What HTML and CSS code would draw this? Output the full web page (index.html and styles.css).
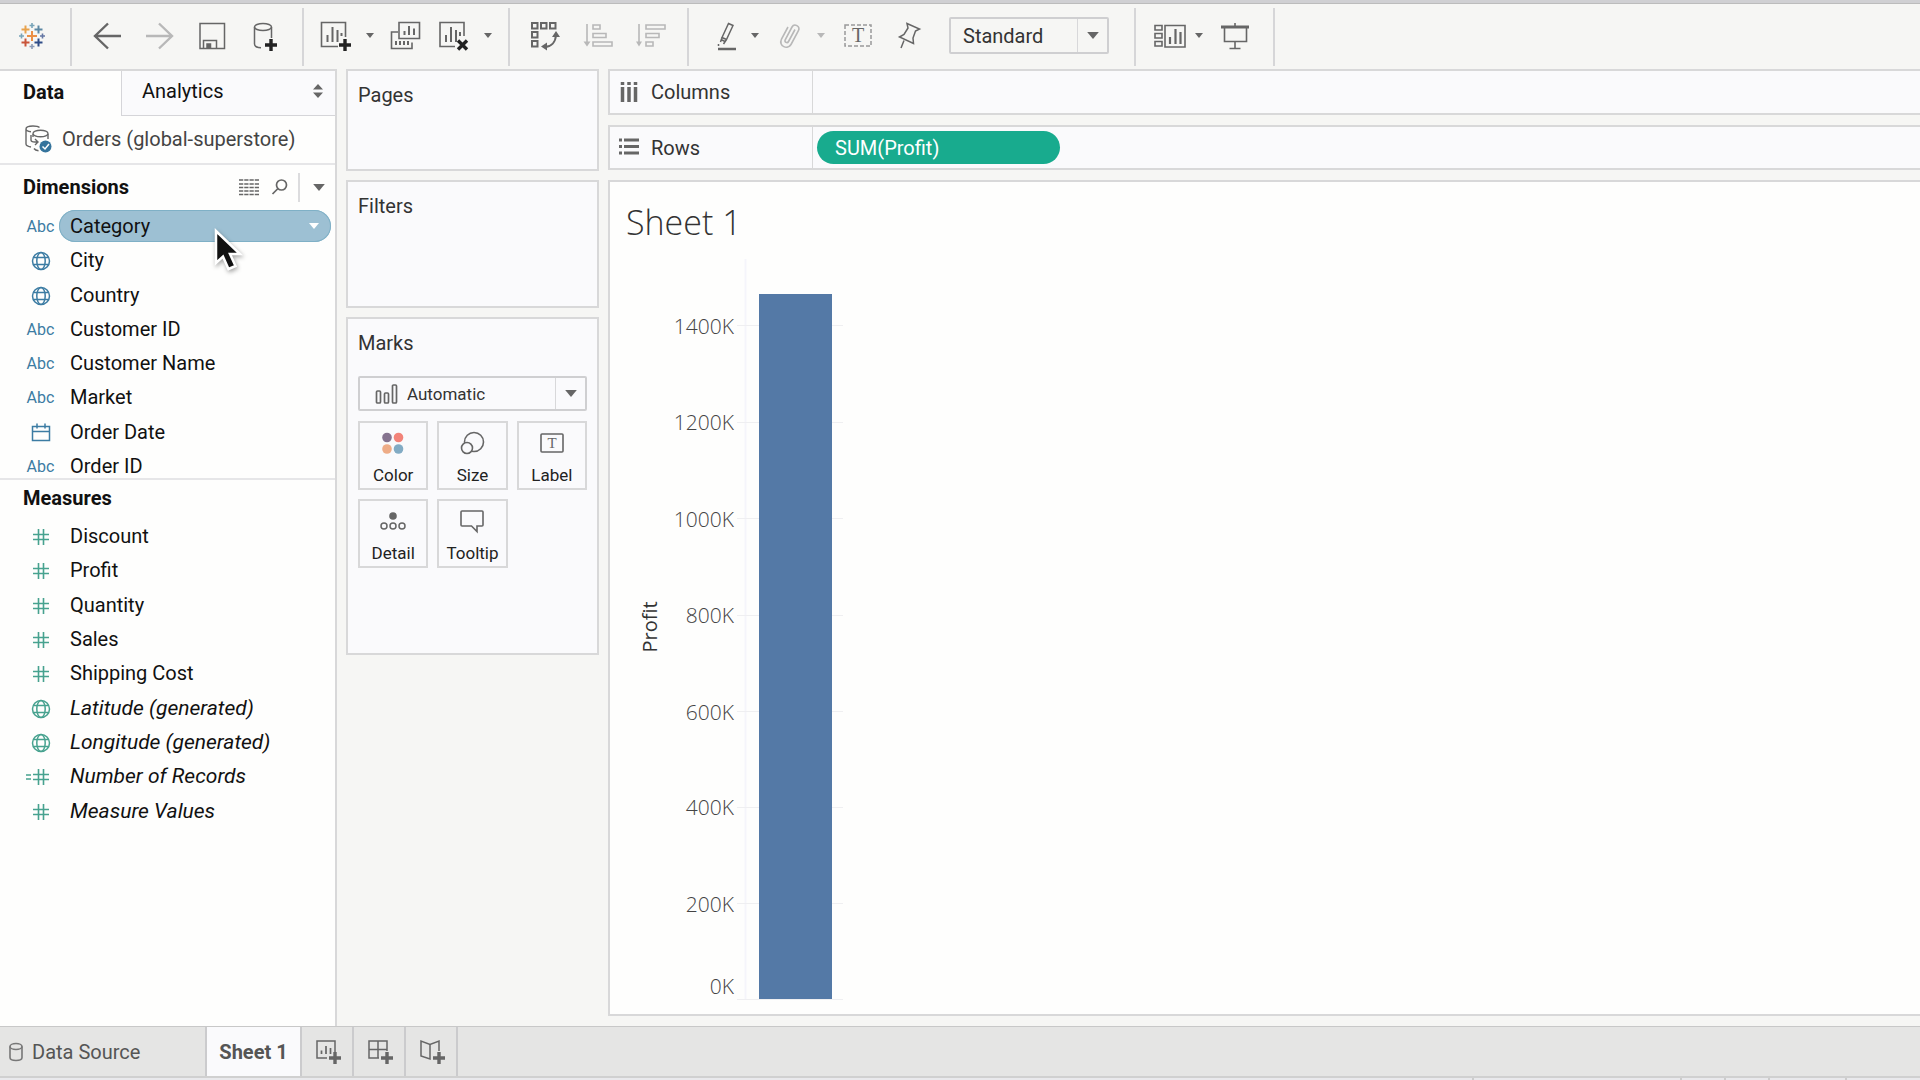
FILE: index.html
```html
<!DOCTYPE html>
<html lang="en">
<head>
<meta charset="utf-8">
<title>Sheet 1</title>
<link rel="stylesheet" href="styles.css">
</head>
<body>
<svg class="defs" aria-hidden="true">
  <symbol id="caret" viewBox="0 0 10 6"><path d="M0 0h10L5 6z" fill="currentColor"/></symbol>
  <symbol id="globe" viewBox="0 0 20 20"><g fill="none" stroke="currentColor" stroke-width="1.5"><circle cx="10" cy="10" r="8.5"/><ellipse cx="10" cy="10" rx="4.2" ry="8.5"/><path d="M2.5 6.5h15M2.5 13.5h15"/></g></symbol>
  <symbol id="hash" viewBox="0 0 18 18"><path d="M6.5 1v16M11.5 1v16M1 6.5h16M1 11.5h16" stroke="currentColor" stroke-width="1.6"/></symbol>
  <symbol id="plus" viewBox="0 0 12 12"><path d="M6 0v12M0 6h12" stroke="currentColor" stroke-width="3.4"/></symbol>
</svg>
<div class="app">
  <header class="toolbar">
    <div class="group group-logo">
      <button aria-label="Start page"><svg width="28" height="28" viewBox="0 0 28 28" fill="none"><g stroke-width="2"><path d="M14 9v10M9 14h10" stroke="#eb8f45"/><path d="M7.500 3.500v8M3.500 7.500h8" stroke="#e8a24c"/><path d="M20.500 3.500v8M16.500 7.500h8" stroke="#5c87a3"/><path d="M7.500 16.500v8M3.500 20.500h8" stroke="#c9553a"/><path d="M20.500 16.500v8M16.500 20.500h8" stroke="#2f4c87"/></g><g stroke-width="1.600"><path d="M14 1v5M11.500 3.500h5M3.500 11.500v5M1 14h5" stroke="#78a4b8"/><path d="M24.500 11.500v5M22 14h5" stroke="#6577a4"/><path d="M14 22v5M11.500 24.500h5" stroke="#8c9bb5"/></g></svg></button>
    </div>
    <div class="group group-wide">
      <button aria-label="Undo"><svg width="30" height="30" viewBox="0 0 30 30" fill="none" stroke="currentColor" stroke-width="2.400"><path d="M29 15H3M16 2.500 3 15l13 12.500"/></svg></button>
      <button class="off" aria-label="Redo"><svg width="30" height="30" viewBox="0 0 30 30" fill="none" stroke="currentColor" stroke-width="2.400"><path d="M1 15h26M14 2.500 27 15 14 27.500"/></svg></button>
      <button aria-label="Save"><svg width="30" height="30" viewBox="0 0 30 30" fill="none" stroke="currentColor" stroke-width="1.500"><path d="M2 2.500h24.500v25H2z"/><path d="M5.500 27.500v-8h13v8"/><path d="M9 23h3.500v4H9z" fill="currentColor"/></svg></button>
      <button aria-label="New data source"><svg width="30" height="30" viewBox="0 0 30 30"><g fill="none" stroke="currentColor" stroke-width="1.500"><ellipse cx="12" cy="6" rx="8.500" ry="3.500"/><path d="M3.500 6v17c0 2 3 3.500 6.500 3.700M20.500 6v11"/></g><use href="#plus" x="14" y="18" width="12" height="12" class="dark"/></svg></button>
    </div>
    <div class="group group-sheet">
      <div class="split">
        <button aria-label="New worksheet"><svg width="30" height="30" viewBox="0 0 30 30"><path d="M25.500 16V1.500h-24v24H18" fill="none" stroke="currentColor" stroke-width="1.600"/><path d="M7.500 14v7M12.500 6v15M17.500 9v12M21.500 12v3" stroke="currentColor" stroke-width="2"/><use href="#plus" x="19" y="18" width="12" height="12" class="dark"/></svg></button>
        <button aria-label="New worksheet options"><svg width="8" height="5"><use href="#caret"/></svg></button>
      </div>
      <button aria-label="Duplicate"><svg width="31" height="30" viewBox="0 0 31 30"><path d="M9 1.500h20.500v16H9zM8 11H1.500v16.500H22v-6" fill="none" stroke="currentColor" stroke-width="1.600"/><path d="M14.500 10v4M19 5v9M24 7.500V14M6 20v4M10 20v4M14 20v4M18 20v4" stroke="currentColor" stroke-width="2"/></svg></button>
      <div class="split">
        <button aria-label="Clear sheet"><svg width="31" height="30" viewBox="0 0 31 30"><path d="M27 15V1.500H3v24h15" fill="none" stroke="currentColor" stroke-width="1.600"/><path d="M9 14v7M14 6v15M19 9v12M23 11v4" stroke="currentColor" stroke-width="2"/><path d="m21 19.500 9 9m0-9-9 9" stroke="#222" stroke-width="3.400"/></svg></button>
        <button aria-label="Clear options"><svg width="8" height="5"><use href="#caret"/></svg></button>
      </div>
    </div>
    <div class="group group-wide">
      <button aria-label="Swap rows and columns"><svg width="30" height="30" viewBox="0 0 30 30"><path d="M2 2h5.500v5.500H2zM11 2h5.500v5.500H11zM20 2h5.500v5.500H20zM2 11h5.500v5.500H2zM2 20h5.500v5.500H2zM14.500 26c7 0 11-5 11.500-12" fill="none" stroke="currentColor" stroke-width="2"/><path d="m26 10 4 6h-8zM11 25.500l6-4v8z" fill="currentColor"/></svg></button>
      <button class="off" aria-label="Sort ascending"><svg width="30" height="30" viewBox="0 0 30 30" fill="none" stroke="currentColor" stroke-width="1.600"><path d="M4 3v20M10 4h7v4h-7zM10 12.500h13v4H10zM10 21h19v4H10z"/><path d="m.500 20.500 3.500 5 3.500-5z" fill="currentColor" stroke="none"/></svg></button>
      <button class="off" aria-label="Sort descending"><svg width="30" height="30" viewBox="0 0 30 30" fill="none" stroke="currentColor" stroke-width="1.600"><path d="M3 3v20M10 4h19v4H10zM10 12.500h13v4H10zM10 21h7v4h-7z"/><path d="m0 20.500 3 5 3-5z" fill="currentColor" stroke="none"/></svg></button>
    </div>
    <div class="group group-format">
      <div class="split narrow">
        <button aria-label="Highlight"><svg width="20" height="30" viewBox="0 0 20 30" fill="none" stroke="currentColor" stroke-width="1.500"><path d="m11.500 2.500 4.500 2-6.500 14-4.500-2zM5 16.500 3.500 21M9.500 18.500 6.500 23M4 18.500l4 2M1.500 23v2"/><path d="M1 28h18" stroke-width="2.500"/></svg></button>
        <button aria-label="Highlight options"><svg width="8" height="5"><use href="#caret"/></svg></button>
      </div>
      <div class="split narrow off">
        <button aria-label="Group"><svg width="24" height="30" viewBox="0 0 24 30" fill="none" stroke="currentColor" stroke-width="1.600"><path d="M16 8.500 9.500 20.500c-1.200 2.300-4.500.6-3.300-1.700L13 6c2.200-4 8.800-1 6.300 4L12 23.500C9 29-1 25.500 2.500 18L9 6"/></svg></button>
        <button aria-label="Group options"><svg width="8" height="5"><use href="#caret"/></svg></button>
      </div>
      <button aria-label="Show mark labels"><svg width="26" height="30" viewBox="0 0 26 30"><path d="M0 4h26v21H0z" fill="none" stroke="#999" stroke-width="1.500" stroke-dasharray="4 2"/><text x="13" y="21" class="glyph">T</text></svg></button>
      <button aria-label="Fix axes"><svg width="38" height="30" viewBox="0 0 38 30" fill="none" stroke="currentColor" stroke-width="1.500"><path d="m16 2.500 12.500 5.500-4 2-2.500 7 .500 5.500-14-6.500 4.500-2.500L17 7zM13 19.500 10 27"/></svg></button>
      <label class="picker">
        <select aria-label="Fit"><option>Standard</option></select>
        <span class="picker-arrow"><svg width="12" height="7"><use href="#caret"/></svg></span>
      </label>
    </div>
    <div class="group group-show">
      <div class="split tight">
        <button aria-label="Show cards"><svg width="32" height="30" viewBox="0 0 32 30"><path d="M1 4.500h7V9H1zM1 12.500h7V17H1zM1 20.500h7V25H1zM11 4.500h20V26H11z" fill="none" stroke="currentColor" stroke-width="1.600"/><path d="M16 16v7M21.500 8v15M26.500 11v12" stroke="currentColor" stroke-width="2.200"/></svg></button>
        <button aria-label="Card options"><svg width="8" height="5"><use href="#caret"/></svg></button>
      </div>
      <button aria-label="Presentation mode"><svg width="28" height="30" viewBox="0 0 28 30" fill="none" stroke="currentColor" stroke-width="1.600"><path d="M14 2v4M3.500 7v13.500h22V7M14 20.500v7M8.500 27.500h11"/><path d="M0 6h28" stroke-width="3"/></svg></button>
    </div>
  </header>

  <main class="workspace">
    <aside class="sidebar">
      <div class="tabs">
        <button class="tab active">Data</button>
        <button class="tab">Analytics<svg width="10" height="14" viewBox="0 0 10 14"><path d="M5 0l5 5.500H0zM5 14 0 8.500h10z" fill="currentColor"/></svg></button>
      </div>
      <div class="source">
        <svg width="28" height="30" viewBox="0 0 28 30"><g fill="none" stroke="#666" stroke-width="1.400"><path d="M2 20V5c0-2 3-3 7-3 3 0 5.500.5 6.500 1.500M2 5c0 1.500 2 2.500 5 2.800M2 20c0 1.500 2 2.500 5 3M7 11v5c0 1.500 2 2 4 2h2M11 15l3 3-3 3M10 24.500c1 1.500 2.500 2 4.500 2.200"/><ellipse cx="16.500" cy="9.500" rx="7.500" ry="3.300"/><path d="M9 10v3M24 10v5"/></g><circle cx="21.500" cy="22.500" r="6" fill="#35749c"/><path d="m18.500 22.500 2.500 2.500 4-5" fill="none" stroke="#fff" stroke-width="1.500"/></svg>
        <span>Orders (global-superstore)</span>
      </div>
      <div class="section-head">
        <h2>Dimensions</h2>
        <div class="tools">
          <button aria-label="View data"><svg width="20" height="16" viewBox="0 0 20 16"><path d="M0 1h20M0 5h20M0 8.500h20M0 12h20M0 15.500h20" stroke="currentColor" stroke-width="1.500" stroke-dasharray="4.250 1"/></svg></button>
          <button aria-label="Search"><svg width="16" height="16" viewBox="0 0 16 16" fill="none" stroke="currentColor" stroke-width="1.700"><circle cx="9.500" cy="6" r="5"/><path d="m6 9.500-5.500 5.500"/></svg></button>
          <button class="menu" aria-label="Menu"><svg width="12" height="7"><use href="#caret"/></svg></button>
        </div>
      </div>
      <div class="dimension-list">
        <ul class="fields dims">
          <li class="selected"><span class="kind">Abc</span><span class="name">Category<svg width="10" height="6"><use href="#caret"/></svg></span></li>
          <li><span class="kind"><svg width="20" height="20"><use href="#globe"/></svg></span><span class="name">City</span></li>
          <li><span class="kind"><svg width="20" height="20"><use href="#globe"/></svg></span><span class="name">Country</span></li>
          <li><span class="kind">Abc</span><span class="name">Customer ID</span></li>
          <li><span class="kind">Abc</span><span class="name">Customer Name</span></li>
          <li><span class="kind">Abc</span><span class="name">Market</span></li>
          <li><span class="kind"><svg width="20" height="20" viewBox="0 0 20 20" fill="none" stroke="currentColor" stroke-width="1.500"><path d="M1.500 3.500h17v14h-17zM1.500 8.500h17M6 .500v5M14 .500v5"/></svg></span><span class="name">Order Date</span></li>
          <li><span class="kind">Abc</span><span class="name">Order ID</span></li>
        </ul>
      </div>
      <h2 class="measures-head">Measures</h2>
      <ul class="fields measures">
        <li><span class="kind"><svg width="18" height="18"><use href="#hash"/></svg></span><span class="name">Discount</span></li>
        <li><span class="kind"><svg width="18" height="18"><use href="#hash"/></svg></span><span class="name">Profit</span></li>
        <li><span class="kind"><svg width="18" height="18"><use href="#hash"/></svg></span><span class="name">Quantity</span></li>
        <li><span class="kind"><svg width="18" height="18"><use href="#hash"/></svg></span><span class="name">Sales</span></li>
        <li><span class="kind"><svg width="18" height="18"><use href="#hash"/></svg></span><span class="name">Shipping Cost</span></li>
        <li class="generated"><span class="kind"><svg width="20" height="20"><use href="#globe"/></svg></span><span class="name">Latitude (generated)</span></li>
        <li class="generated"><span class="kind"><svg width="20" height="20"><use href="#globe"/></svg></span><span class="name">Longitude (generated)</span></li>
        <li class="generated"><span class="kind"><svg width="30" height="18" viewBox="0 0 30 18"><path d="M0 7h5M0 11h5" stroke="currentColor" stroke-width="1.500"/><use href="#hash" x="6" width="18" height="18"/></svg></span><span class="name">Number of Records</span></li>
        <li class="generated"><span class="kind"><svg width="18" height="18"><use href="#hash"/></svg></span><span class="name">Measure Values</span></li>
      </ul>
      <svg class="cursor" width="30" height="44" viewBox="0 0 30 44"><path d="M2 2v32l7-6.500L14.500 40l7-3-5.500-12h10z" fill="#111" stroke="#fff" stroke-width="2.500"/></svg>
    </aside>

    <section class="cards">
      <div class="card pages"><h3>Pages</h3></div>
      <div class="card filters"><h3>Filters</h3></div>
      <div class="card marks">
        <h3>Marks</h3>
        <label class="picker mark-type">
          <svg class="picker-icon" width="24" height="22" viewBox="0 0 24 22" fill="none" stroke="#666" stroke-width="1.700"><rect x="1.500" y="8" width="4" height="12" rx="1"/><rect x="9.500" y="10" width="4" height="10" rx="1"/><rect x="17.500" y="2" width="4" height="18" rx="1"/></svg>
          <select aria-label="Mark type"><option>Automatic</option></select>
          <span class="picker-arrow"><svg width="12" height="7"><use href="#caret"/></svg></span>
        </label>
        <div class="mark-grid">
          <button><svg width="28" height="28" viewBox="0 0 28 28"><circle cx="8" cy="8.500" r="4.800" fill="#85738f"/><circle cx="19.500" cy="8.500" r="4.800" fill="#f28379"/><circle cx="8" cy="20" r="4.800" fill="#eeac87"/><circle cx="19.500" cy="20" r="4.800" fill="#82abc4"/></svg>Color</button>
          <button><svg width="28" height="28" viewBox="0 0 28 28" stroke="#666" stroke-width="1.600"><circle cx="16" cy="13" r="9.500" fill="none"/><circle cx="9" cy="19" r="5.500" fill="#fafafc"/></svg>Size</button>
          <button><svg width="28" height="28" viewBox="0 0 28 28"><rect x="3" y="5" width="22" height="18" rx="1" fill="none" stroke="#666" stroke-width="1.600"/><text x="14" y="19" class="glyph small">T</text></svg>Label</button>
          <button><svg width="28" height="28" viewBox="0 0 28 28" fill="none" stroke="#666" stroke-width="1.500"><circle cx="14" cy="9" r="3.800" fill="#666" stroke="none"/><circle cx="5" cy="19" r="3"/><circle cx="14" cy="19" r="3"/><circle cx="23" cy="19" r="3"/></svg>Detail</button>
          <button><svg width="28" height="28" viewBox="0 0 28 28" fill="none" stroke="#666" stroke-width="1.600"><path d="M4 4h20a1 1 0 0 1 1 1v13a1 1 0 0 1-1 1h-5v5.500L13.500 19H4a1 1 0 0 1-1-1V5a1 1 0 0 1 1-1z"/></svg>Tooltip</button>
        </div>
      </div>
    </section>

    <section class="canvas">
      <div class="shelf">
        <div class="shelf-name"><svg width="20" height="20" viewBox="0 0 20 20"><path d="M3.500 0v3M10 0v3M16.500 0v3M3.500 5v15M10 5v15M16.500 5v15" stroke="#666" stroke-width="3.500"/></svg>Columns</div>
        <div class="shelf-drop"></div>
      </div>
      <div class="shelf">
        <div class="shelf-name"><svg width="20" height="20" viewBox="0 0 20 20"><path d="M0 2h3M0 8.500h3M0 15h3M5 2h15M5 8.500h15M5 15h15" stroke="#666" stroke-width="3.200"/></svg>Rows</div>
        <div class="shelf-drop"><button class="pill">SUM(Profit)</button></div>
      </div>
      <div class="view">
        <h1>Sheet 1</h1>
        <svg class="chart" width="220" height="744" viewBox="0 0 220 744" role="img" aria-label="Profit bar chart">
          <path d="M119.500 1v741" stroke="#f5f5fb" stroke-width="2"/>
          <path d="M111 67.500h106M111 164.500h106M111 260.500h106M111 357.500h106M111 453.500h106M111 549.500h106M111 645.500h106M111 741.500h106" stroke="#efeff1"/>
          <rect x="133" y="36" width="73" height="705" fill="#5479a6"/>
          <g class="ticks">
            <text x="108" y="76">1400K</text>
            <text x="108" y="172">1200K</text>
            <text x="108" y="269">1000K</text>
            <text x="108" y="365">800K</text>
            <text x="108" y="462">600K</text>
            <text x="108" y="557">400K</text>
            <text x="108" y="654">200K</text>
            <text x="108" y="736">0K</text>
          </g>
          <text class="axis" transform="translate(31 369) rotate(-90)">Profit</text>
        </svg>
      </div>
    </section>
  </main>

  <footer>
    <nav class="sheets">
      <button class="data-source"><svg width="16" height="20" viewBox="0 0 16 20" fill="none" stroke="#777" stroke-width="1.600"><ellipse cx="8" cy="4.500" rx="6" ry="3"/><path d="M2 4.500v11c0 4 12 4 12 0v-11"/></svg>Data Source</button>
      <button class="sheet active">Sheet 1</button>
      <button class="add" aria-label="New worksheet"><svg width="26" height="26" viewBox="0 0 26 26"><path d="M20 13V2H2v17h10" fill="none" stroke="currentColor" stroke-width="1.500"/><path d="M6.500 11.500V15M11 7v8M15.500 9v6" stroke="currentColor" stroke-width="1.700"/><use href="#plus" x="14" y="13" width="12" height="12"/></svg></button>
      <button class="add" aria-label="New dashboard"><svg width="26" height="26" viewBox="0 0 26 26"><path d="M20 12V2H2v17h10M2 10.500h18M11 2v17" fill="none" stroke="currentColor" stroke-width="1.500"/><use href="#plus" x="14" y="13" width="12" height="12"/></svg></button>
      <button class="add" aria-label="New story"><svg width="26" height="26" viewBox="0 0 26 26"><path d="M20 12V2l-9 3.500L2 2v15l9 3V5.500" fill="none" stroke="currentColor" stroke-width="1.500"/><use href="#plus" x="14" y="13" width="12" height="12"/></svg></button>
    </nav>
    <div class="status"><span></span><span></span><span></span><span></span><span></span></div>
  </footer>
</div>
</body>
</html>
```
FILE: styles.css
```css
* { box-sizing: border-box; }

body {
  margin: 0;
  background: #f6f6f4;
  color: #333;
  font: 20px/24px Roboto, "Liberation Sans", sans-serif;
}

h1, h2, h3, ul { margin: 0; padding: 0; font-weight: 400; }
ul { list-style: none; }
svg { display: block; flex: none; overflow: visible; }
.defs { position: absolute; width: 0; height: 0; }

button, select {
  margin: 0;
  padding: 0;
  border: 0;
  border-radius: 0;
  background: none;
  color: inherit;
  font: inherit;
}

.app { display: flex; flex-direction: column; min-height: 100vh; }

/* Toolbar */
.toolbar {
  display: flex;
  height: 69px;
  padding: 5px 0 3px;
  border-top: 3px solid #d0d0d3;
  box-shadow: inset 0 1px #bcbcbc;
  color: #666;
}
.group {
  display: flex;
  align-items: center;
  padding-bottom: 3px;
  border-right: 2px solid #d6d6d8;
}
.group-logo { padding-left: 18px; padding-right: 24px; }
.group-wide { gap: 23px; padding-left: 20px; padding-right: 21px; }
.group-sheet { gap: 16px; padding-left: 16px; padding-right: 16px; }
.group-format { gap: 20px; padding-left: 28px; padding-right: 25px; }
.group-show { gap: 18px; padding-left: 18px; padding-right: 24px; }
.split { display: flex; align-items: center; gap: 16px; }
.split.narrow { gap: 14px; }
.split.tight { gap: 9px; }
.off { color: #b8b8b8; }
.dark { color: #222; }
.glyph { font: 20px "Liberation Serif", serif; fill: #666; text-anchor: middle; }
.glyph.small { font-size: 15px; }

.picker {
  display: grid;
  grid-template-columns: 1fr 30px;
  width: 160px;
  height: 37px;
  border: 2px solid #cfcfd1;
  border-radius: 2px;
  color: #333;
}
.picker select {
  grid-area: 1 / 1 / 2 / 3;
  appearance: none;
  padding-left: 12px;
}
.picker-arrow {
  grid-area: 1 / 2;
  display: grid;
  place-items: center;
  border-left: 1px solid #d8d8da;
  color: #666;
  pointer-events: none;
}

/* Workspace columns */
.workspace {
  flex: 1;
  display: grid;
  grid-template-columns: 337px 253px 1fr;
  column-gap: 9px;
}

.sidebar {
  position: relative;
  border-top: 2px solid #d8d8d9;
  border-right: 2px solid #d8d8d9;
  background: #fefefd;
  color: #111;
}
.tabs { display: grid; grid-template-columns: 121px 1fr; height: 45px; }
.tab {
  display: flex;
  align-items: center;
  justify-content: space-between;
  padding: 0 12px 4px 20px;
  border: solid #d5d5d9;
  border-width: 0 0 1px 1px;
  background: #fafafc;
}
.tab svg { color: #666; }
.tab.active { padding-left: 23px; border: 0; background: none; font-weight: 700; }
.source {
  display: flex;
  align-items: center;
  gap: 10px;
  height: 49px;
  padding: 0 0 2px 24px;
  border-bottom: 2px solid #e6e6e8;
  color: #444;
}
.section-head {
  display: flex;
  align-items: center;
  justify-content: space-between;
  height: 44px;
  padding: 0 10px 0 23px;
}
h2 { font-size: 20px; font-weight: 700; }
.tools { display: flex; align-items: center; gap: 13px; color: #666; }
.tools .menu { height: 29px; margin-left: -3px; padding-left: 13px; border-left: 2px solid #dcdcde; }

.dimension-list { height: 271px; overflow: hidden; border-bottom: 2px solid #e6e6e8; }
.fields { display: flex; flex-direction: column; }
.fields li { flex: 1; display: flex; align-items: center; padding: 0 4px 0 22px; }
.dims { height: 274px; }
.measures { height: 309px; }
.kind {
  display: grid;
  justify-content: center;
  width: 37px;
  padding-top: 2px;
  color: #3c7ca3;
  font-size: 16px;
}
.measures .kind { color: #47a28f; }
.name {
  flex: 1;
  display: flex;
  align-items: center;
  justify-content: space-between;
  height: 32px;
  padding: 0 12px 0 11px;
}
.selected .name {
  border-radius: 16px;
  background: #9dc0d3;
  box-shadow: inset 0 0 0 1px #7fb0c6;
}
.name svg { color: #fff; }
.generated .name { font-size: 21px; font-style: italic; }
.measures-head { padding: 6px 23px 9px; }
.cursor { position: absolute; left: 214px; top: 158px; filter: drop-shadow(1px 2px 2px rgba(0, 0, 0, .35)); }

/* Cards */
.cards { display: flex; flex-direction: column; gap: 9px; }
.card { padding: 12px 10px; border: 2px solid #d8d8d9; background: #fafafc; }
h3 { font-size: 20px; }
.pages { height: 102px; }
.filters { height: 128px; }
.marks { height: 338px; }
.mark-type { grid-template-columns: 47px 1fr 30px; width: 100%; height: 35px; margin-top: 21px; border-width: 2px; }
.mark-type .picker-icon { grid-area: 1 / 1; place-self: center end; margin-right: 8px; }
.mark-type select { grid-area: 1 / 1 / 2 / 4; padding-left: 47px; font-size: 17px; }
.mark-type .picker-arrow { grid-area: 1 / 3; }
.mark-grid { display: grid; grid-template-columns: repeat(3, 1fr); gap: 9px; margin-top: 10px; }
.mark-grid button {
  display: flex;
  flex-direction: column;
  align-items: center;
  gap: 6px;
  height: 69px;
  padding-top: 6px;
  border: 2px solid #d8d8d9;
  color: #222;
  font-size: 17px;
}

/* Shelves and view */
.canvas { display: flex; flex-direction: column; gap: 10px; min-width: 0; padding-bottom: 10px; }
.shelf {
  display: grid;
  grid-template-columns: 203px 1fr;
  height: 46px;
  border: 2px solid #d8d8d9;
  border-right: 0;
  background: #fafafc;
}
.shelf + .shelf { height: 45px; }
.shelf-name { display: flex; align-items: center; gap: 12px; padding-left: 9px; border-right: 1px solid #d8d8d9; }
.shelf-drop { display: flex; align-items: center; padding-left: 4px; }
.pill {
  width: 243px;
  height: 33px;
  padding-left: 18px;
  border-radius: 17px;
  background: #18ab8e;
  color: #fff;
  text-align: left;
}
.view {
  flex: 1;
  padding: 20px 16px 0;
  border: 2px solid #d8d8d9;
  border-right: 0;
  background: #fefefd;
}
h1 { font: 300 34px/40px "Open Sans", "Noto Sans", sans-serif; }
.chart { margin-top: 16px; }
.ticks { font: 300 21px "Open Sans", "Noto Sans", sans-serif; fill: #444; text-anchor: end; }
.axis { font: 400 20px "Open Sans", "Noto Sans", sans-serif; fill: #333; text-anchor: middle; }

/* Sheet tabs */
.sheets { display: flex; height: 50px; border-top: 1px solid #c8c8c8; background: #e5e5e4; color: #555; }
.sheets button { display: flex; align-items: center; border-right: 2px solid #cbcbcd; }
.sheets .data-source { gap: 8px; width: 207px; padding-left: 8px; }
.sheets .sheet { justify-content: center; width: 95px; background: #fafafc; font-weight: 700; }
.sheets .add { justify-content: center; width: 52px; padding-left: 2px; color: #666; }
.status { display: flex; justify-content: flex-end; height: 4px; border-top: 2px solid #d0d0d0; background: #e9e9ec; padding-right: 73px; }
.status span { border-right: 2px solid #ccc; width: 44px; }
.status span:first-child { width: 2px; }
.status span:nth-child(2) { width: 208px; }
.status span:last-child { width: 77px; }
```
